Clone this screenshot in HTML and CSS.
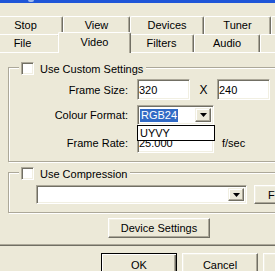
FILE: index.html
```html
<!DOCTYPE html>
<html lang="en">
<head>
    <meta charset="UTF-8">
    <title>Capture Settings</title>
    <link rel="stylesheet" href="styles.css">
</head>
<body>
    <div class="titlebar"><span class="title-icon"></span></div>

    <div class="tabstrip">
        <div class="tab-row tab-row-back">
            <div class="tab tab-stop">Stop</div>
            <div class="tab tab-view">View</div>
            <div class="tab tab-devices">Devices</div>
            <div class="tab tab-tuner">Tuner</div>
            <div class="tab tab-more"></div>
        </div>
        <div class="tab-row tab-row-front">
            <div class="tab tab-file">File</div>
            <div class="tab tab-video active">Video</div>
            <div class="tab tab-filters">Filters</div>
            <div class="tab tab-audio">Audio</div>
            <div class="tab tab-more"></div>
        </div>
    </div>

    <div class="sheet">
        <div class="group group-custom">
            <div class="group-head">
                <span class="check"></span>
                <span>Use Custom Settings</span>
            </div>
            <div class="form-grid">
                <label class="form-label">Frame Size:</label>
                <div class="form-line">
                    <input type="text" class="field field-size" value="320">
                    <span class="times">X</span>
                    <input type="text" class="field field-size" value="240">
                </div>

                <label class="form-label">Colour Format:</label>
                <div class="combo combo-format">
                    <span class="combo-text"><span class="selected-text">RGB24</span></span>
                    <span class="combo-btn">
                        <svg width="7" height="4" viewBox="0 0 7 4"><polygon points="0,0 7,0 3.5,4" fill="#000"/></svg>
                    </span>
                    <div class="combo-list">
                        <div class="combo-item">UYVY</div>
                    </div>
                </div>

                <label class="form-label form-label-rate">Frame Rate:</label>
                <div class="form-line form-line-rate">
                    <input type="text" class="field field-rate" value="25.000">
                    <span class="unit">f/sec</span>
                </div>
            </div>
        </div>

        <div class="group group-compress">
            <div class="group-head">
                <span class="check"></span>
                <span>Use Compression</span>
            </div>
            <div class="compress-line">
                <div class="combo combo-codec">
                    <span class="combo-text"></span>
                    <span class="combo-btn">
                        <svg width="7" height="4" viewBox="0 0 7 4"><polygon points="0,0 7,0 3.5,4" fill="#000"/></svg>
                    </span>
                </div>
                <button type="button" class="button button-format">F</button>
            </div>
        </div>

        <button type="button" class="button button-device">Device Settings</button>
    </div>

    <div class="dialog-buttons">
        <button type="button" class="button button-default">OK</button>
        <button type="button" class="button">Cancel</button>
        <button type="button" class="button"></button>
    </div>
</body>
</html>
```

FILE: styles.css
```css
* {
    margin: 0;
    padding: 0;
    box-sizing: border-box;
}

body {
    width: 275px;
    height: 271px;
    overflow: hidden;
    background: #ECE9D8;
    font-family: 'Liberation Sans', Arial, sans-serif;
    font-size: 11px;
    color: #000;
}

/* window caption, cropped */
.titlebar {
    height: 3px;
    background: #1F56D8;
    display: flex;
}

.title-icon {
    width: 6px;
    height: 2px;
    margin-left: 28px;
    background: #9DB8EE;
    border-radius: 0 0 3px 3px;
}

/* tabs */
.tabstrip {
    margin-top: 13px;
}

.tab-row {
    display: flex;
    height: 18px;
    white-space: nowrap;
}

.tab-row-back {
    margin-left: -12px;
}

.tab-row-front {
    margin-left: -15px;
}

.tab {
    flex: none;
    height: 18px;
    line-height: 17px;
    text-align: center;
    background: #ECE9D8;
    border-top: 1px solid #fff;
    border-left: 1px solid #fff;
    border-right: 1px solid #716F64;
    box-shadow: inset -1px 0 #ACA899;
    border-radius: 2px 2px 0 0;
}

.tab-stop { width: 75px; }
.tab-view { width: 67px; }
.tab-devices { width: 74px; }
.tab-tuner { width: 67px; }
.tab-file { width: 75px; }
.tab-video { width: 69px; }
.tab-filters { width: 65px; }
.tab-audio { width: 66px; }
.tab-more { width: 60px; }

.tab.active {
    width: 73px;
    height: 21px;
    margin: -2px -2px -1px;
    line-height: 19px;
    position: relative;
    z-index: 1;
}

/* tab page */
.sheet {
    border-top: 1px solid #fff;
    border-bottom: 1px solid #716F64;
    box-shadow: inset 0 -1px #ACA899;
    padding: 14px 0 7px;
}

.group {
    margin-left: 8px;
    width: 290px;
    border: 1px solid #ACA899;
    box-shadow: inset 1px 1px #fff, 1px 1px #fff;
}

.group-custom {
    padding-bottom: 8px;
}

.group-compress {
    margin-top: 10px;
    padding-bottom: 8px;
}

.group-head {
    display: flex;
    align-items: center;
    gap: 6px;
    width: fit-content;
    height: 13px;
    margin: -6px 0 0 10px;
    padding: 0 3px 0 2px;
    background: #ECE9D8;
    position: relative;
}

.check {
    width: 13px;
    height: 13px;
    background: #fff;
    border-style: solid;
    border-width: 1px;
    border-color: #ACA899 #fff #fff #ACA899;
    box-shadow: inset 1px 1px #716F64, inset -1px -1px #F1EFE2;
}

/* custom settings form */
.form-grid {
    display: grid;
    grid-template-columns: 119px auto;
    column-gap: 9px;
    row-gap: 5px;
    align-items: center;
    margin-top: 4px;
}

.form-label {
    text-align: right;
}

.form-label-rate,
.form-line-rate {
    margin-top: 2px;
}

.form-line {
    display: flex;
    align-items: center;
}

.field {
    height: 21px;
    padding: 0 1px;
    font: inherit;
    color: #000;
    background: #fff;
    outline: none;
    border-style: solid;
    border-width: 1px;
    border-color: #ACA899 #fff #fff #ACA899;
    box-shadow: inset 1px 1px #716F64, inset -1px -1px #F1EFE2;
}

.field-size {
    width: 53px;
}

.times {
    width: 27px;
    text-align: center;
    font-size: 12px;
}

.field-rate {
    width: 77px;
}

.unit {
    margin-left: 8px;
}

/* combo boxes */
.combo {
    flex: none;
    display: flex;
    align-items: center;
    height: 20px;
    padding: 2px;
    background: #fff;
    position: relative;
    border-style: solid;
    border-width: 1px;
    border-color: #ACA899 #fff #fff #ACA899;
    box-shadow: inset 1px 1px #716F64, inset -1px -1px #F1EFE2;
}

.combo-format {
    width: 77px;
}

.combo-codec {
    width: 211px;
    height: 19px;
}

.combo-text {
    flex: 1;
    display: flex;
    height: 100%;
    align-items: center;
}

.selected-text {
    background: #316AC5;
    color: #fff;
    padding: 0 1px;
    line-height: 13px;
}

.combo-btn {
    width: 16px;
    height: 100%;
    display: flex;
    align-items: center;
    justify-content: center;
    background: #ECE9D8;
    border: 1px solid;
    border-color: #F1EFE2 #716F64 #716F64 #F1EFE2;
    box-shadow: inset -1px -1px #ACA899, inset 1px 1px #fff;
}

.combo-list {
    position: absolute;
    top: 19px;
    left: -1px;
    width: 78px;
    height: 16px;
    background: #fff;
    border: 1px solid #000;
    z-index: 2;
}

.combo-item {
    padding-left: 2px;
    line-height: 14px;
}

.compress-line {
    display: flex;
    gap: 7px;
    margin: 5px 0 0 27px;
}

/* push buttons */
.button {
    height: 20px;
    font: inherit;
    color: #000;
    background: #ECE9D8;
    border: 1px solid;
    border-color: #fff #716F64 #716F64 #fff;
    box-shadow: inset -1px -1px #ACA899, inset 1px 1px #F1EFE2;
    flex: none;
}

.button-format {
    width: 40px;
    height: 19px;
    text-align: left;
    padding-left: 13px;
}

.button-device {
    display: block;
    width: 102px;
    margin: 5px 0 0 108px;
}

.dialog-buttons {
    display: flex;
    gap: 5px;
    margin: 7px 0 0 101px;
}

.dialog-buttons .button {
    width: 76px;
    height: 23px;
}

.dialog-buttons .button-default {
    border: 1px solid #000;
    box-shadow: inset 1px 1px #fff, inset -1px -1px #716F64, inset -2px -2px #ACA899;
}
```
